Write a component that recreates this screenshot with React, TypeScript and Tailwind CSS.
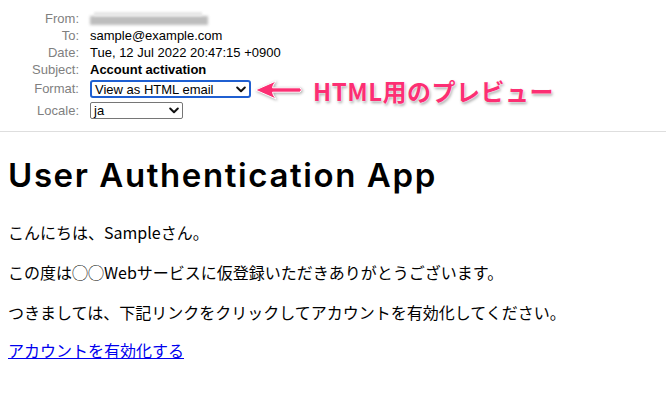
import type { ReactNode } from 'react';

const sans = "font-['Liberation_Sans','Noto_Sans_CJK_JP',sans-serif]";
const jp = "font-['Noto_Sans_CJK_JP','Noto_Sans',sans-serif]";

function Row({ label, children, h = 'h-[17px]' }: { label: string; children: ReactNode; h?: string }) {
  return (
    <div className={`flex items-center ${h}`}>
      <div className="w-[80px] shrink-0 pr-[1px] text-right text-[#7f7f7f]">{label}</div>
      <div className="ml-[10px] flex items-center">{children}</div>
    </div>
  );
}

function Chevron() {
  return (
    <svg width="10" height="7" viewBox="0 0 10 7" className="shrink-0">
      <path d="M1.2 1.5 L5 5.2 L8.8 1.5" fill="none" stroke="#111" strokeWidth="2" strokeLinecap="round" strokeLinejoin="round" />
    </svg>
  );
}

function FakeSelect({ value, width, focused }: { value: string; width: string; focused?: boolean }) {
  return (
    <div
      className={`flex items-center justify-between bg-white text-black ${width} ${
        focused
          ? 'h-[18px] rounded-[3px] border-2 border-[#1f5fd1] pl-[3px] pr-[3px]'
          : 'h-[17px] rounded-[2px] border border-[#767676] pl-[3px] pr-[3px]'
      }`}
    >
      <span className="leading-none">{value}</span>
      <Chevron />
    </div>
  );
}

function Arrow() {
  return (
    <svg width="52" height="26" viewBox="0 0 52 26" className="absolute left-[254px] top-[77px] drop-shadow-[1px_1px_1.5px_rgba(0,0,0,0.35)]">
      <path d="M1.5 13 L22 4 Q18.5 8.5 18.5 10.8 L46 10.8 Q49 13 46 15.2 L18.5 15.2 Q18.5 17.5 22 22 Z" fill="#fc2f73" stroke="white" strokeWidth="1" strokeLinejoin="round" />
    </svg>
  );
}

export default function App() {
  return (
    <div className="relative h-[401px] w-[666px] overflow-hidden bg-white">
      <header className={`border-b border-[#dedede] pb-[10px] pt-[10px] text-[13px] ${sans}`}>
        <Row label="From:">
          <div className="relative h-[14px] w-[118px]">
            <div className="absolute left-0 top-[4px] h-[9px] w-[118px] bg-[#bdbdbd] blur-[1.5px]" />
            <div className="absolute left-[4px] top-[0px] h-[4px] w-[108px] bg-[#e6e6e6] blur-[1px]" />
          </div>
        </Row>
        <Row label="To:">sample@example.com</Row>
        <Row label="Date:">Tue, 12 Jul 2022 20:47:15 +0900</Row>
        <Row label="Subject:">
          <span className="font-bold">Account activation</span>
        </Row>
        <Row label="Format:" h="h-[22px]">
          <FakeSelect value="View as HTML email" width="w-[161px]" focused />
        </Row>
        <Row label="Locale:" h="h-[21px]">
          <FakeSelect value="ja" width="w-[93px]" />
        </Row>
      </header>

      <Arrow />
      <div
        className={`absolute left-[313px] top-[76px] text-[24px] font-bold leading-[30px] tracking-[0.5px] text-[#fc2f73] ${jp} [text-shadow:0_0_1px_white,0_0_2px_white,1px_2px_3px_rgba(0,0,0,0.35)]`}
      >
        HTML用のプレビュー
      </div>

      <main className="px-2">
        <h1 className="mb-[25px] mt-[23px] font-['Inter',sans-serif] text-[33px] font-semibold leading-[40px] tracking-[1.6px] text-black">
          User Authentication App
        </h1>
        <div className={`text-[16px] leading-6 text-black ${jp}`}>
          <p className="mb-4">こんにちは、Sampleさん。</p>
          <p className="mb-4">この度は◯◯Webサービスに仮登録いただきありがとうございます。</p>
          <p className="mb-[14px]">つきましては、下記リンクをクリックしてアカウントを有効化してください。</p>
          <p>
            <a href="#" className="text-[#0000ee] underline">
              アカウントを有効化する
            </a>
          </p>
        </div>
      </main>
    </div>
  );
}
